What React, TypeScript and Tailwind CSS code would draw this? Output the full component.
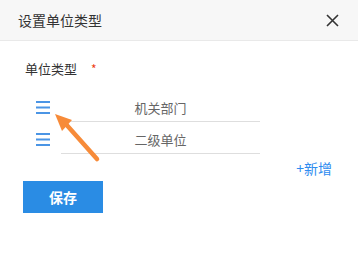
import React from "react";

function MenuIcon() {
  return (
    <svg width="14" height="13" viewBox="0 0 14 13" className="shrink-0">
      <rect x="0" y="0" width="14" height="2" fill="#4b95e5" />
      <rect x="0" y="5.5" width="14" height="2" fill="#4b95e5" />
      <rect x="0" y="11" width="14" height="2" fill="#4b95e5" />
    </svg>
  );
}

const items = ["机关部门", "二级单位"];

export default function App() {
  return (
    <div className="relative w-[358px] h-[265px] bg-white font-['Noto_Sans_CJK_SC',sans-serif] overflow-hidden">
      <div className="flex h-[41px] items-center justify-between border-b border-[#e9e9e9] bg-[#f7f7f7] pl-[18px] pr-[19px]">
        <span className="text-[14px] leading-none text-[#333]">设置单位类型</span>
        <svg width="13" height="13" viewBox="0 0 13 13">
          <path d="M1 1L12 12M12 1L1 12" stroke="#333" strokeWidth="1.6" />
        </svg>
      </div>

      <div className="pl-[25px] pt-[20px]">
        <div className="flex items-center text-[13px] leading-[16px] text-[#333]">
          单位类型
          <span className="ml-[14px] text-[12px] text-[#ed4014]">*</span>
        </div>

        <div className="mt-[15px] flex flex-col gap-[2px] pl-[11px]">
          {items.map((t) => (
            <div key={t} className="flex items-center h-[30px]">
              <MenuIcon />
              <div className="ml-[11px] flex h-[30px] w-[199px] items-center justify-center border-b border-[#dedede] pt-[2px] text-[13px] text-[#666]">
                {t}
              </div>
            </div>
          ))}
        </div>

        <div className="flex justify-end pr-[26px] mt-[6px]">
          <span className="text-[14px] leading-[16px] text-[#2d8cf0]">+新增</span>
        </div>

        <button className="mt-[5px] flex h-[32px] w-[80px] items-center justify-center bg-[#2a8ce4] text-[14px] font-bold text-white -ml-[2px]">
          保存
        </button>
      </div>

      <svg className="absolute left-0 top-0" width="358" height="265" viewBox="0 0 358 265">
        <path d="M97 159 L64 122" stroke="#f78b39" strokeWidth="4.5" strokeLinecap="round" />
        <path d="M55 114 L72 120 L62 131 Z" fill="#f78b39" />
      </svg>
    </div>
  );
}
